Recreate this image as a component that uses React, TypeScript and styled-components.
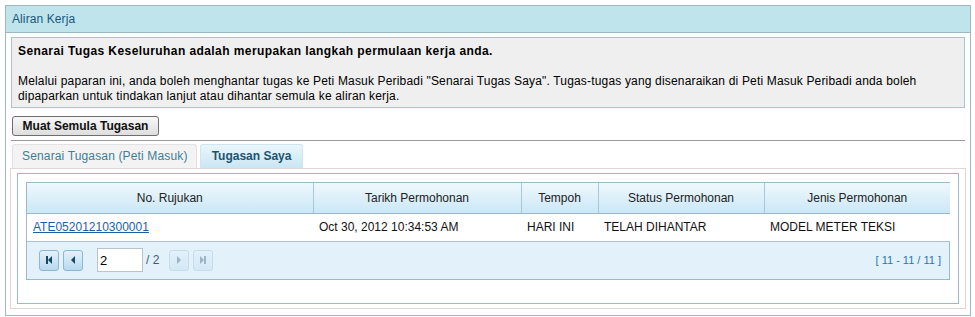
import React from "react";
import styled, { createGlobalStyle, css } from "styled-components";

const GlobalStyle = createGlobalStyle`
  html, body { margin: 0; padding: 0; background: #ffffff; }
  body { font-family: "Liberation Sans", Arial, sans-serif; font-size: 12px; color: #000; }
  * { box-sizing: border-box; }
`;

const Page = styled.div`
  padding: 5px 4px 0 5px;
`;

const Panel = styled.section`
  border: 1px solid #9db8c0;
  background: #ffffff;
`;

const PanelHeader = styled.header`
  height: 27px;
  background: #c0e4ec;
  border-bottom: 1px solid #9db8c0;
  color: #17587c;
  font-size: 12px;
  line-height: 26px;
  padding-left: 6px;
  letter-spacing: 0.1px;
`;

const PanelBody = styled.div`
  padding: 4px 4px 6px 4px;
`;

const InfoBox = styled.div`
  margin: 0 1px;
  background: #efefef;
  border: 1px solid #a8c6cb;
  padding: 6px 6px 3px 6px;
  line-height: 15px;
  letter-spacing: 0.17px;
`;

const InfoTitle = styled.p`
  margin: 0 0 15px 0;
  font-weight: bold;
  letter-spacing: 0.42px;
`;

const InfoText = styled.p`
  margin: 0;
`;

const Toolbar = styled.div`
  margin: 8px 1px 0 1px;
  padding: 0 0 4px 1px;
  border-bottom: 1px solid #9a9a9a;
`;

const Button = styled.button`
  height: 20px;
  width: 147px;
  padding: 0;
  font-family: "Liberation Sans", Arial, sans-serif;
  font-size: 12px;
  font-weight: bold;
  color: #111;
  background: linear-gradient(#f8f8f8, #dedede);
  border: 1px solid #6e6e6e;
  border-radius: 3px;
  cursor: pointer;
`;

const TabList = styled.div`
  display: flex;
  gap: 3px;
  margin-top: 3px;
  padding-left: 2px;
`;

const Tab = styled.div<{ $active?: boolean }>`
  height: 24px;
  line-height: 23px;
  font-size: 12px;
  border: 1px solid #e2e2e2;
  border-bottom: none;
  border-radius: 3px 3px 0 0;
  ${(p) =>
    p.$active
      ? css`
          background: linear-gradient(#eaf6fc, #c9e6f3);
          border-color: #cfe6f0;
          color: #1d5473;
          font-weight: bold;
          padding: 0 11px;
        `
      : css`
          background: #f3f3f3;
          color: #3c7f97;
          padding: 0 8px 0 9px;
          letter-spacing: 0.15px;
        `}
`;

const TabPanel = styled.div`
  border: 1px solid #ddd8d4;
  padding: 4px 6px 4px 6px;
`;

const GridFrame = styled.div`
  border: 1px solid #9dbccb;
  padding: 8px 8px 23px 8px;
`;

const Grid = styled.div`
  border: 1px solid #9ab9c9;
`;

const Table = styled.table`
  width: 100%;
  border-collapse: collapse;
  table-layout: fixed;
  font-size: 12px;
`;

const Th = styled.th`
  height: 30px;
  font-weight: normal;
  color: #222;
  text-align: center;
  background: linear-gradient(#eef8fd, #cbe7f6);
  border-left: 1px solid #a9c7d6;
  border-bottom: 1px solid #9ab9c9;
  padding: 0;
  &:first-child { border-left: none; }
`;

const Td = styled.td`
  height: 28px;
  padding: 0 6px;
  color: #111;
  background: #ffffff;
  border-bottom: 1px solid #a9c3d1;
  white-space: nowrap;
`;

const RefLink = styled.a`
  color: #1c5fa8;
  text-decoration: underline;
`;

const Pager = styled.div`
  height: 37px;
  background: #e3f1fa;
  display: flex;
  align-items: center;
  padding: 0 8px 0 12px;
`;

const PagerButton = styled.span<{ $disabled?: boolean }>`
  width: 20px;
  height: 21px;
  display: inline-flex;
  align-items: center;
  justify-content: center;
  border: 1px solid #8db6d1;
  border-radius: 3px;
  background: linear-gradient(#e3f2fb, #b8d9ee);
  margin-right: 4px;
  ${(p) =>
    p.$disabled &&
    css`
      opacity: 0.35;
    `}
`;

const PageInput = styled.input`
  width: 46px;
  height: 24px;
  margin-left: 10px;
  border: 1px solid #b9c4cc;
  background: #fff;
  font-family: "Liberation Sans", Arial, sans-serif;
  font-size: 13px;
  padding: 0 2px;
  color: #000;
`;

const PageTotal = styled.span`
  color: #3a5e76;
  font-size: 12px;
  margin: 0 10px 0 3px;
`;

const Summary = styled.span`
  margin-left: auto;
  color: #2a78ad;
  font-size: 11px;
`;

const Icon = ({ kind }: { kind: "first" | "prev" | "next" | "last" }) => {
  const fill = "#1a4766";
  return (
    <svg width="10" height="10" viewBox="0 0 10 10">
      {kind === "first" && (
        <>
          <rect x="2" y="1" width="2" height="8" fill={fill} />
          <path d="M8 1 L4 5 L8 9 Z" fill={fill} />
        </>
      )}
      {kind === "prev" && <path d="M7 1 L3 5 L7 9 Z" fill={fill} />}
      {kind === "next" && <path d="M3 1 L7 5 L3 9 Z" fill={fill} />}
      {kind === "last" && (
        <>
          <path d="M2 1 L6 5 L2 9 Z" fill={fill} />
          <rect x="6" y="1" width="2" height="8" fill={fill} />
        </>
      )}
    </svg>
  );
};

const columns = [
  { label: "No. Rujukan", width: 286 },
  { label: "Tarikh Permohonan", width: 208 },
  { label: "Tempoh", width: 77 },
  { label: "Status Permohonan", width: 166 },
  { label: "Jenis Permohonan", width: 186 },
];

export default function App() {
  return (
    <>
      <GlobalStyle />
      <Page>
        <Panel>
          <PanelHeader>Aliran Kerja</PanelHeader>
          <PanelBody>
            <InfoBox>
              <InfoTitle>
                Senarai Tugas Keseluruhan adalah merupakan langkah permulaan kerja anda.
              </InfoTitle>
              <InfoText>
                Melalui paparan ini, anda boleh menghantar tugas ke Peti Masuk Peribadi "Senarai Tugas
                Saya". Tugas-tugas yang disenaraikan di Peti Masuk Peribadi anda boleh
                <br />
                dipaparkan untuk tindakan lanjut atau dihantar semula ke aliran kerja.
              </InfoText>
            </InfoBox>
            <Toolbar>
              <Button type="button">Muat Semula Tugasan</Button>
            </Toolbar>
            <TabList>
              <Tab>Senarai Tugasan (Peti Masuk)</Tab>
              <Tab $active>Tugasan Saya</Tab>
            </TabList>
            <TabPanel>
              <GridFrame>
                <Grid>
                  <Table>
                    <colgroup>
                      {columns.map((c) => (
                        <col key={c.label} style={{ width: c.width }} />
                      ))}
                    </colgroup>
                    <thead>
                      <tr>
                        {columns.map((c) => (
                          <Th key={c.label}>{c.label}</Th>
                        ))}
                      </tr>
                    </thead>
                    <tbody>
                      <tr>
                        <Td>
                          <RefLink href="#">ATE05201210300001</RefLink>
                        </Td>
                        <Td>Oct 30, 2012 10:34:53 AM</Td>
                        <Td>HARI INI</Td>
                        <Td>TELAH DIHANTAR</Td>
                        <Td>MODEL METER TEKSI</Td>
                      </tr>
                    </tbody>
                  </Table>
                  <Pager>
                    <PagerButton><Icon kind="first" /></PagerButton>
                    <PagerButton><Icon kind="prev" /></PagerButton>
                    <PageInput defaultValue="2" />
                    <PageTotal>/ 2</PageTotal>
                    <PagerButton $disabled><Icon kind="next" /></PagerButton>
                    <PagerButton $disabled><Icon kind="last" /></PagerButton>
                    <Summary>[ 11 - 11 / 11 ]</Summary>
                  </Pager>
                </Grid>
              </GridFrame>
            </TabPanel>
          </PanelBody>
        </Panel>
      </Page>
    </>
  );
}
